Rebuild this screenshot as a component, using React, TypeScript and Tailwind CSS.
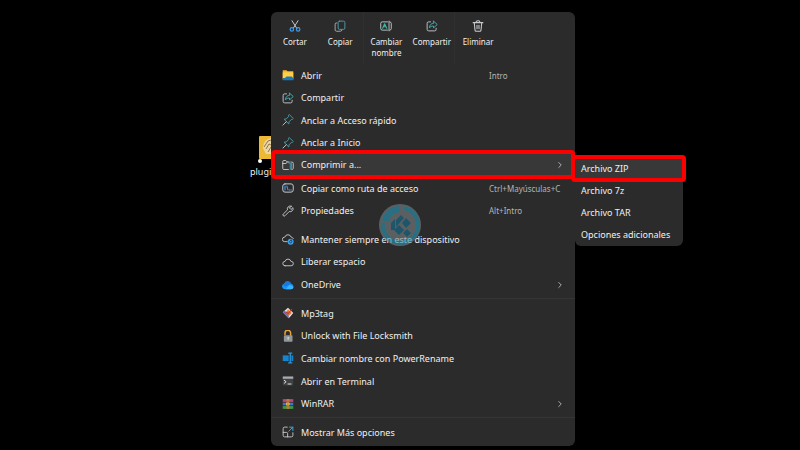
import { ReactNode } from "react";
import { ChevronRight } from "lucide-react";

type IconProps = { children: ReactNode };

const Svg = ({ children }: IconProps) => (
  <svg
    viewBox="0 0 16 16"
    fill="none"
    stroke="#c9cccf"
    strokeLinecap="round"
    strokeLinejoin="round"
    className="size-3 shrink-0"
    aria-hidden="true"
  >
    {children}
  </svg>
);

const icons = {
  cut: (
    <Svg>
      <path d="M4 1l6.3 10M12 1L5.700 11" strokeWidth="1.300" />
      <circle cx="3.800" cy="12.500" r="2.300" stroke="#3d9be9" strokeWidth="1.600" />
      <circle cx="12.200" cy="12.500" r="2.300" stroke="#3d9be9" strokeWidth="1.600" />
    </Svg>
  ),
  copy: (
    <Svg>
      <path d="M4 4H3a1.500 1.500 0 0 0-1.500 1.500v8A2 2 0 0 0 3.500 15h5a2 2 0 0 0 2-1.500" />
      <rect x="5.500" y="1.500" width="9" height="11" rx="1.800" stroke="#4f98a8" strokeWidth="1.300" />
    </Svg>
  ),
  rename: (
    <Svg>
      <path
        d="M10 2.500H3A2 2 0 0 0 1 4.500v7a2 2 0 0 0 2 2h7M13 2.500a2 2 0 0 1 2 2v7a2 2 0 0 1-2 2M12 1.500v13"
        strokeWidth="1.200"
      />
      <path d="M3.500 11L6.200 5l2.800 6M4.500 9h3.500" stroke="#35b9a5" strokeWidth="1.500" />
    </Svg>
  ),
  share: (
    <Svg>
      <path d="M6 2.500H3.500a2 2 0 0 0-2 2v8a2 2 0 0 0 2 2h8a2 2 0 0 0 2-2V11" strokeWidth="1.200" />
      <path
        d="M10 1.500l5 4.500-5 4.500V8C7.500 8 5.800 8.800 4.500 10.500 4.800 6.500 7 4.500 10 4.200z"
        stroke="#35aeb5"
        strokeWidth="1.300"
      />
    </Svg>
  ),
  trash: (
    <Svg>
      <path
        d="M1.500 3.500h13M5.500 3.500V3a2 2 0 0 1 2-2h1a2 2 0 0 1 2 2v.5M3 3.500l1 10A1.600 1.600 0 0 0 5.500 15h5a1.600 1.600 0 0 0 1.500-1.500l1-10M6.700 7v4.500M9.300 7v4.500"
        strokeWidth="1.400"
      />
    </Svg>
  ),
  folder: (
    <Svg>
      <path d="M1 1.500h5l1.500 1.500H15v11H1z" fill="#f3b92e" stroke="none" />
      <path d="M1 4.500h14V13H1z" fill="#ffd147" stroke="none" />
      <path d="M1 15h14v-3l-2-2H6l-2 2H1z" fill="#1c79b9" stroke="none" />
    </Svg>
  ),
  pin: (
    <Svg>
      <path
        d="M10 1l5 5-1.300 1.300-1.200 0L9.500 10.300l-.5 3L2.700 7l3-.5 3-3V2.300z"
        stroke="#4a9aa5"
        strokeWidth="1.300"
      />
      <path d="M5.700 10.300L1.200 14.800" strokeWidth="1.200" />
    </Svg>
  ),
  zip: (
    <Svg>
      <path
        d="M8.500 14H2.500A1.500 1.500 0 0 1 1 12.500V3.500A1.500 1.500 0 0 1 2.500 2H5l2 2h2M1 6h4.500L7 4M13 4a1.800 1.800 0 0 1 2 2v6.500a1.800 1.800 0 0 1-2 1.500"
        strokeWidth="1.200"
      />
      <path d="M9.500 6V4h3v10M11 6v8" stroke="#419fc0" strokeWidth="1.200" />
    </Svg>
  ),
  path: (
    <Svg>
      <rect x="1" y="2.500" width="14" height="11" rx="3" strokeWidth="1.300" />
      <path d="M4 5.500v5M6.500 5.500l1.500 5M10 10.500h.3M12 10.500h.3" stroke="#4b93de" strokeWidth="1.500" />
    </Svg>
  ),
  wrench: (
    <Svg>
      <path
        d="M12.500 1.500a4 4 0 0 0-5.200 5L1.700 12a1.600 1.600 0 0 0 2.300 2.300l5.600-5.600a4 4 0 0 0 5-5.200L12 6l-2-2z"
        strokeWidth="1.200"
      />
    </Svg>
  ),
  cloudSync: (
    <Svg>
      <path d="M7 11.500H3.500a3 3 0 0 1 0-6h.3a4.300 4.300 0 0 1 8.300 0c1.500 0 2.700 1 3 2" strokeWidth="1.200" />
      <circle cx="11.500" cy="11.500" r="4" fill="#3aa0ee" stroke="none" />
      <path d="M9.800 11.500a1.700 1.700 0 1 0 1.700-1.700M11.500 9.800l1.500-.5" stroke="#15354f" />
    </Svg>
  ),
  cloud: (
    <Svg>
      <path
        d="M4 13h8.200a2.900 2.900 0 0 0 0-5.800h-.3a4 4 0 0 0-7.800 0H4A2.900 2.900 0 0 0 4 13z"
        strokeWidth="1.200"
      />
    </Svg>
  ),
  oneDrive: (
    <Svg>
      <path
        d="M4 13.500h8a3.700 3.700 0 0 0 .3-7.300A5 5 0 0 0 3 6 3.800 3.800 0 0 0 4 13.500z"
        fill="#1b94f5"
        stroke="none"
      />
      <path d="M3 6A5 5 0 0 1 12.300 6.200L5 10 1 8z" fill="#1878e0" stroke="none" />
      <path d="M5 13.500h7a3.700 3.700 0 0 0 3.500-3L10 7.500z" fill="#37b4ff" stroke="none" />
    </Svg>
  ),
  mp3tag: (
    <Svg>
      <path d="M8 1l7 7-6 7-8-8z" fill="#e9e3e8" stroke="none" />
      <path d="M1 7l8 8v-4L4 5z" fill="#7565a8" stroke="none" />
      <path d="M8 3l5 5-4 4-4-4z" fill="#e27837" stroke="none" />
      <path d="M6 7l2 2 5-6" stroke="#b3402b" strokeWidth="1.500" />
    </Svg>
  ),
  lock: (
    <Svg>
      <path d="M4 6V4a3.500 3.500 0 0 1 7.500 0v3" stroke="#e9a33b" strokeWidth="2" />
      <rect x="2.500" y="7" width="11.500" height="8.500" rx="1" fill="#92979a" stroke="none" />
      <circle cx="8.300" cy="10.500" r="1.300" fill="#d8dcdf" stroke="none" />
      <path d="M8.300 11v2" />
    </Svg>
  ),
  powerRename: (
    <Svg>
      <path d="M1 4.500h8v7.500H1z" fill="#1685d0" stroke="none" />
      <path d="M12.500 4.500H15V12h-2.500z" fill="#1685d0" stroke="none" />
      <path d="M9 1.500h4M9 14.500h4M11 1.500v13" stroke="#2b96dc" strokeWidth="1.800" />
    </Svg>
  ),
  terminal: (
    <Svg>
      <rect x="1" y="2" width="14" height="12" rx="1" fill="#3f4143" stroke="none" />
      <path d="M1 2h14v3H1z" fill="#a9acae" stroke="none" />
      <path d="M3 7l2.500 2L3 11M8 12h4" stroke="#e5e5e5" strokeWidth="1.300" />
    </Svg>
  ),
  winrar: (
    <Svg>
      <path d="M1 1.500h14v4H1z" fill="#b64b7d" stroke="none" />
      <path d="M1 6h14v4H1z" fill="#4073d0" stroke="none" />
      <path d="M1 10.500h14v4H1z" fill="#379c43" stroke="none" />
      <path d="M6 1.500h4v13H6z" fill="#c27b2f" stroke="none" />
      <path d="M1 5.700h14M1 10.200h14" stroke="#552d35" />
      <path d="M6.500 6.500h3v3h-3z" stroke="#efc55b" />
    </Svg>
  ),
  more: (
    <Svg>
      <path
        d="M7 1.500H3.500a2 2 0 0 0-2 2v9a2 2 0 0 0 2 2h9a2 2 0 0 0 2-2V9M1.500 8.500H6a1.500 1.500 0 0 1 1.500 1.500v4.500"
        strokeWidth="1.200"
      />
      <path d="M10 1.500h4.500V6M14.500 1.500L9 7" stroke="#41a9df" strokeWidth="1.300" />
    </Svg>
  ),
};

type IconName = keyof typeof icons;

type Item = {
  label: string;
  icon: IconName;
  shortcut?: string;
  arrow?: boolean;
  submenu?: string[];
};

const actions: { label: string; icon: IconName; divider?: boolean }[] = [
  { label: "Cortar", icon: "cut" },
  { label: "Copiar", icon: "copy", divider: true },
  { label: "Cambiar nombre", icon: "rename" },
  { label: "Compartir", icon: "share", divider: true },
  { label: "Eliminar", icon: "trash" },
];

const fileItems: Item[] = [
  { label: "Abrir", icon: "folder", shortcut: "Intro" },
  { label: "Compartir", icon: "share" },
  { label: "Anclar a Acceso rápido", icon: "pin" },
  { label: "Anclar a Inicio", icon: "pin" },
  {
    label: "Comprimir a...",
    icon: "zip",
    arrow: true,
    submenu: ["Archivo ZIP", "Archivo 7z", "Archivo TAR", "Opciones adicionales"],
  },
  { label: "Copiar como ruta de acceso", icon: "path", shortcut: "Ctrl+Mayúsculas+C" },
  { label: "Propiedades", icon: "wrench", shortcut: "Alt+Intro" },
];

const cloudItems: Item[] = [
  { label: "Mantener siempre en este dispositivo", icon: "cloudSync" },
  { label: "Liberar espacio", icon: "cloud" },
  { label: "OneDrive", icon: "oneDrive", arrow: true },
];

const appItems: Item[] = [
  { label: "Mp3tag", icon: "mp3tag" },
  { label: "Unlock with File Locksmith", icon: "lock" },
  { label: "Cambiar nombre con PowerRename", icon: "powerRename" },
  { label: "Abrir en Terminal", icon: "terminal" },
  { label: "WinRAR", icon: "winrar", arrow: true },
];

const Submenu = ({ labels }: { labels: string[] }) => (
  <ul className="absolute top-px left-full z-20 w-[108px] rounded-b-md bg-[#2b2b2b] pb-px">
    {labels.map((label, i) => (
      <li key={label}>
        <button
          className={
            i === 0
              ? "-mb-[3px] -ml-1 flex h-[27px] w-[115px] items-center rounded-sm border-4 border-[#fb0000] bg-[#383838] pl-1.5"
              : "flex h-[22px] w-full items-center pl-1.5"
          }
        >
          {label}
        </button>
      </li>
    ))}
  </ul>
);

const MenuItem = ({ item }: { item: Item }) => (
  <li className="relative grid">
    <button
      className={
        item.submenu
          ? "-mt-1 -mb-0.5 flex items-center rounded-sm border-4 border-[#fb0000] bg-[#383838] pr-1.5 pl-[7px] text-left"
          : "flex items-center pr-2.5 pl-[11px] text-left"
      }
    >
      {icons[item.icon]}
      <span className="ml-[7px] flex-1">{item.label}</span>
      {item.shortcut && (
        <span className="w-[76px] text-[8px] text-[#b5b5b5]">{item.shortcut}</span>
      )}
      {item.arrow && <ChevronRight className="size-2.5 text-[#c4c4c4]" strokeWidth={2} />}
    </button>
    {item.submenu && <Submenu labels={item.submenu} />}
  </li>
);

const Watermark = () => (
  <svg
    viewBox="0 0 44 44"
    className="pointer-events-none absolute top-[191px] left-[107px] size-11 opacity-60"
    aria-hidden="true"
  >
    <circle cx="22" cy="22" r="21" fill="#7e8386" />
    <path d="M26 5a17.500 17.500 0 1 1-21 15" fill="none" stroke="#2a9cbb" strokeWidth="4" />
    <path d="M4 18A18 18 0 0 1 21 3l1 6a13 13 0 0 0-11 9z" fill="#2a9cbb" />
    <path d="M13 20l4-4v11h-4zM18 17l5-5 3 3-8 9zM28 15l5 5-5 5-4-5zM21 22l5 5-5 5-5-5zM29 26l4 4-4 4-4-4z" fill="#157494" />
  </svg>
);

const App = () => {
  return (
    <main className="flex min-h-screen items-start overflow-hidden bg-black pt-3 pl-[250px] font-['Noto_Sans',sans-serif] text-[9px] leading-[11px] text-[#f0f0f0]">
      {/* Desktop file behind the menu */}
      <div className="mt-[123px] flex w-[21px] shrink-0 flex-col">
        <svg viewBox="0 0 12 24" className="ml-[9px] h-6 w-3" aria-hidden="true">
          <path d="M0 2a1 1 0 0 1 1-1h11v23H1a1 1 0 0 1-1-1z" fill="#edb934" />
          <path d="M12 3C7 4 4 8 4 13l3 6h5z" fill="#e9d6a2" />
          <path d="M5 12l4-6 3-1M7 14l3-5 2 1M9 17l3-5" stroke="#927450" fill="none" />
        </svg>
        <span className="ml-2 size-1 rounded-full bg-white" />
        <span className="mt-[3px]">plugi</span>
      </div>

      <nav
        aria-label="Menú contextual"
        className="relative w-[304px] shrink-0 rounded-md bg-[#2b2b2b] pb-[3px]"
      >
        <div className="grid h-[52px] w-[230px] grid-cols-5 pl-px">
          {actions.map((action) => (
            <button
              key={action.label}
              className={
                action.divider
                  ? "flex flex-col items-center border-r border-[#303030] pt-2"
                  : "flex flex-col items-center pt-2"
              }
            >
              {icons[action.icon]}
              <span className="mt-1 text-[8px]">{action.label}</span>
            </button>
          ))}
        </div>

        <ul className="grid h-[158px] auto-rows-fr">
          {fileItems.map((item) => (
            <MenuItem key={item.label} item={item} />
          ))}
        </ul>

        <ul className="mt-1.5 grid h-[68px] auto-rows-fr">
          {cloudItems.map((item) => (
            <MenuItem key={item.label} item={item} />
          ))}
        </ul>

        <hr className="mt-0.5 mb-[3px] border-[#353535]" />

        <ul className="grid h-[113px] auto-rows-fr">
          {appItems.map((item) => (
            <MenuItem key={item.label} item={item} />
          ))}
        </ul>

        <hr className="mt-0.5 mb-[3px] border-[#353535]" />

        <ul className="grid h-[22px]">
          <MenuItem item={{ label: "Mostrar Más opciones", icon: "more" }} />
        </ul>

        <Watermark />
      </nav>
    </main>
  );
};

export default App;
